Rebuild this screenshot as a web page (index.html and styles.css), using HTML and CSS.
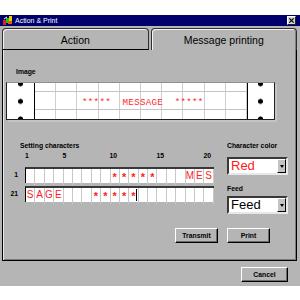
FILE: index.html
```html
<!DOCTYPE html>
<html>
<head>
<meta charset="utf-8">
<link rel="stylesheet" href="styles.css">
</head>
<body>
<div class="top-gap"></div>
<div class="window">
  <div class="titlebar">
    <svg class="app-icon" viewBox="0 0 10 9" width="10" height="9">
      <rect x="0" y="4" width="3" height="5" fill="#e02020"/>
      <rect x="3" y="2" width="3" height="5" fill="#20c020"/>
      <rect x="6" y="0" width="3" height="5" fill="#f0d000"/>
      <rect x="5" y="5" width="4" height="3" fill="#e06000"/>
      <path d="M1 3 L4 1" stroke="#ffffff" stroke-width="1"/>
    </svg>
    <span class="title">Action &amp; Print</span>
    <span class="close">
      <svg viewBox="0 0 8 8" width="8" height="8"><path d="M1.5 1.5 L6.5 6.5 M6.5 1.5 L1.5 6.5" stroke="#000" stroke-width="1.4"/></svg>
    </span>
  </div>

  <div class="tabs">
    <div class="tab tab-inactive">Action</div>
    <div class="tab tab-active">Message printing</div>
  </div>

  <div class="panel">
    <div class="label image-label">Image</div>
    <div class="strip">
      <div class="holes holes-left"></div>
      <div class="tape"><div class="tape-text">*****  MESSAGE  *****</div></div>
      <div class="holes holes-right"></div>
    </div>

    <div class="lower">
      <div class="chars">
        <div class="label chars-label">Setting characters</div>
        <div class="ruler">
          <span class="r1">1</span>
          <span class="r5">5</span>
          <span class="r10">10</span>
          <span class="r15">15</span>
          <span class="r20">20</span>
        </div>
        <div class="char-row">
          <span class="row-no">1</span>
          <div class="cells">
            <span class="cell"></span><span class="cell"></span><span class="cell"></span><span class="cell"></span><span class="cell"></span>
            <span class="cell"></span><span class="cell"></span><span class="cell"></span><span class="cell"></span><span class="cell star">*</span>
            <span class="cell star">*</span><span class="cell star">*</span><span class="cell star">*</span><span class="cell star">*</span><span class="cell"></span>
            <span class="cell"></span><span class="cell"></span><span class="cell">M</span><span class="cell">E</span><span class="cell">S</span>
          </div>
        </div>
        <div class="char-row row-two">
          <span class="row-no">21</span>
          <div class="cells">
            <span class="cell">S</span><span class="cell">A</span><span class="cell">G</span><span class="cell">E</span><span class="cell"></span>
            <span class="cell"></span><span class="cell"></span><span class="cell star">*</span><span class="cell star">*</span><span class="cell star">*</span>
            <span class="cell star">*</span><span class="cell star cursor">*</span><span class="cell"></span><span class="cell"></span><span class="cell"></span>
            <span class="cell"></span><span class="cell"></span><span class="cell"></span><span class="cell"></span><span class="cell"></span>
          </div>
        </div>
      </div>

      <div class="side">
        <div class="label">Character color</div>
        <div class="combo combo-first"><span class="combo-value red">Red</span><span class="arrow"></span></div>
        <div class="label feed-label">Feed</div>
        <div class="combo combo-second"><span class="combo-value">Feed</span><span class="arrow"></span></div>
      </div>
    </div>

    <div class="actions">
      <button class="btn">Transmit</button>
      <button class="btn">Print</button>
    </div>
  </div>

  <div class="footer">
    <button class="btn btn-cancel">Cancel</button>
  </div>
</div>
</body>
</html>
```

FILE: styles.css
```css
* { box-sizing: border-box; }

html, body {
  margin: 0;
  padding: 0;
  background: #ffffff;
}

body {
  width: 300px;
  height: 300px;
  overflow: hidden;
  font-family: "Liberation Sans", Arial, sans-serif;
  color: #000;
}

.top-gap { height: 15px; }

.window {
  height: 271px;
  background: #b5b5b5;
  display: flex;
  flex-direction: column;
}

/* title bar */
.titlebar {
  height: 11px;
  background: #00006c;
  display: flex;
  align-items: center;
  padding: 0 3px 0 3px;
}
.app-icon { flex: none; }
.title {
  color: #ffffff;
  font-size: 7px;
  line-height: 11px;
  margin-left: 2px;
  flex: 1;
}
.close {
  width: 9px;
  height: 9px;
  background: #d4d4d4;
  border: 1px solid;
  border-color: #ffffff #202020 #202020 #ffffff;
  display: flex;
  align-items: center;
  justify-content: center;
  margin-right: 1px;
}
.close svg { width: 7px; height: 7px; }

/* tabs */
.tabs {
  display: flex;
  gap: 2px;
  margin-top: 2px;
  padding: 0 3px 0 2px;
  height: 22px;
}
.tab {
  flex: 1;
  height: 22px;
  border: 1px solid #303030;
  border-radius: 4px 4px 0 0;
  box-shadow: inset 1px 1px 0 #f4f4f4;
  display: flex;
  align-items: center;
  justify-content: center;
  font-size: 10.5px;
  padding-top: 1px;
}
.tab-inactive {
  border-bottom: 1px solid #000;
}
.tab-active {
  border-bottom: none;
  box-shadow: inset 1px 1px 0 #f4f4f4, inset -1px 0 0 #808080;
}

/* panel */
.panel {
  height: 211px;
  margin: 0 3px 0 2px;
  border: 1px solid #000;
  border-top: none;
  box-shadow: inset 1px 0 0 #e8e8e8, inset -1px -1px 0 #7a7a7a;
  padding: 0 3px;
  display: flex;
  flex-direction: column;
}

.label {
  font-size: 6.8px;
  font-weight: bold;
  line-height: 10px;
  height: 10px;
  white-space: nowrap;
}
.image-label {
  margin: 17px 0 0 10px;
}

/* image strip */
.strip {
  margin-top: 5px;
  width: 269px;
  height: 38px;
  background: #ffffff;
  border: 1px solid #202020;
  border-top-color: #909090;
  display: flex;
  box-shadow: 2px 2px 0 #c4c4c4;
}
.holes {
  background-image: radial-gradient(circle at center, #000 0 2.2px, transparent 2.8px);
  background-size: 100% 17.6px;
  background-position: 0 -8px;
  background-repeat: repeat-y;
}
.holes-left { width: 28px; border-right: 1px solid #000; }
.holes-right { width: 26px; border-left: 1px solid #000; }
.tape {
  width: 212px;
  background-image:
    linear-gradient(to bottom, transparent 0 8px, #c4c4c4 8px 9px, transparent 9px 26px, #c4c4c4 26px 27px, transparent 27px),
    repeating-linear-gradient(to right, transparent 0 20.2px, #cfcfcf 20.2px 21.2px);
}
.tape-text {
  font-family: "Liberation Mono", "Courier New", monospace;
  font-size: 9.2px;
  letter-spacing: 0.28px;
  color: #ff2a2a;
  white-space: pre;
  padding: 15px 0 0 47px;
  line-height: 10px;
}

/* lower section */
.lower {
  display: flex;
  margin-top: 21px;
}
.chars {
  width: 213px;
}
.chars-label {
  margin-left: 14px;
}
.ruler {
  margin-left: 19px;
  display: grid;
  grid-template-columns: repeat(20, 9.4px);
  height: 10px;
  font-size: 6.8px;
  font-weight: bold;
  line-height: 10px;
}
.ruler span { white-space: nowrap; }
.r1 { grid-column: 1; }
.r5 { grid-column: 5; }
.r10 { grid-column: 10; }
.r15 { grid-column: 15; }
.r20 { grid-column: 20; }

.char-row {
  display: flex;
  margin-top: 6px;
  height: 16px;
  align-items: center;
}
.row-two { margin-top: 3px; }
.row-no {
  width: 12px;
  margin-right: 7px;
  text-align: right;
  font-size: 6.8px;
  font-weight: bold;
  line-height: 10px;
}
.cells {
  display: grid;
  grid-template-columns: repeat(20, 9.4px);
  height: 16px;
  background: #ffffff;
  border-top: 2px solid #383838;
  border-left: 1px solid #000;
}
.cell {
  border-right: 1px solid #c8c8c8;
  color: #ff2020;
  font-size: 10px;
  line-height: 14px;
  text-align: center;
  position: relative;
}
.star {
  font-size: 11px;
  font-weight: bold;
  line-height: 16px;
}
.cursor::after {
  content: "";
  position: absolute;
  right: 1px;
  top: 1px;
  width: 1px;
  height: 12px;
  background: #000;
}

/* side column */
.side {
  margin-left: 8px;
  display: flex;
  flex-direction: column;
}
.combo {
  width: 61px;
  height: 18px;
  background: #ffffff;
  border: 2px solid;
  border-color: #383838 #e8e8e8 #e8e8e8 #383838;
  display: flex;
  align-items: stretch;
}
.combo-first { margin-top: 6px; }
.feed-label { margin-top: 9px; }
.combo-second { margin-top: 2px; }
.combo-value {
  flex: 1;
  font-size: 13px;
  line-height: 14px;
  padding-left: 2px;
}
.red { color: #ff1a1a; }
.arrow {
  width: 9px;
  background: #c4c4c4;
  border: 1px solid;
  border-color: #ffffff #000 #000 #ffffff;
  display: flex;
  align-items: center;
  justify-content: center;
}
.arrow::after {
  content: "";
  border-left: 2.5px solid transparent;
  border-right: 2.5px solid transparent;
  border-top: 3px solid #000;
}

/* buttons */
.actions {
  display: flex;
  justify-content: flex-end;
  gap: 9px;
  margin-top: 14px;
  padding-right: 23px;
}
.btn {
  width: 43px;
  height: 15px;
  padding: 0;
  background: #b5b5b5;
  border: 1px solid;
  border-color: #ffffff #000 #000 #ffffff;
  box-shadow: inset -1px -1px 0 #6a6a6a;
  font-family: "Liberation Sans", Arial, sans-serif;
  font-size: 6.8px;
  font-weight: bold;
  color: #000;
}
.footer {
  display: flex;
  justify-content: flex-end;
  padding: 6px 12px 0 0;
  height: 25px;
}
.btn-cancel { width: 47px; }
```
